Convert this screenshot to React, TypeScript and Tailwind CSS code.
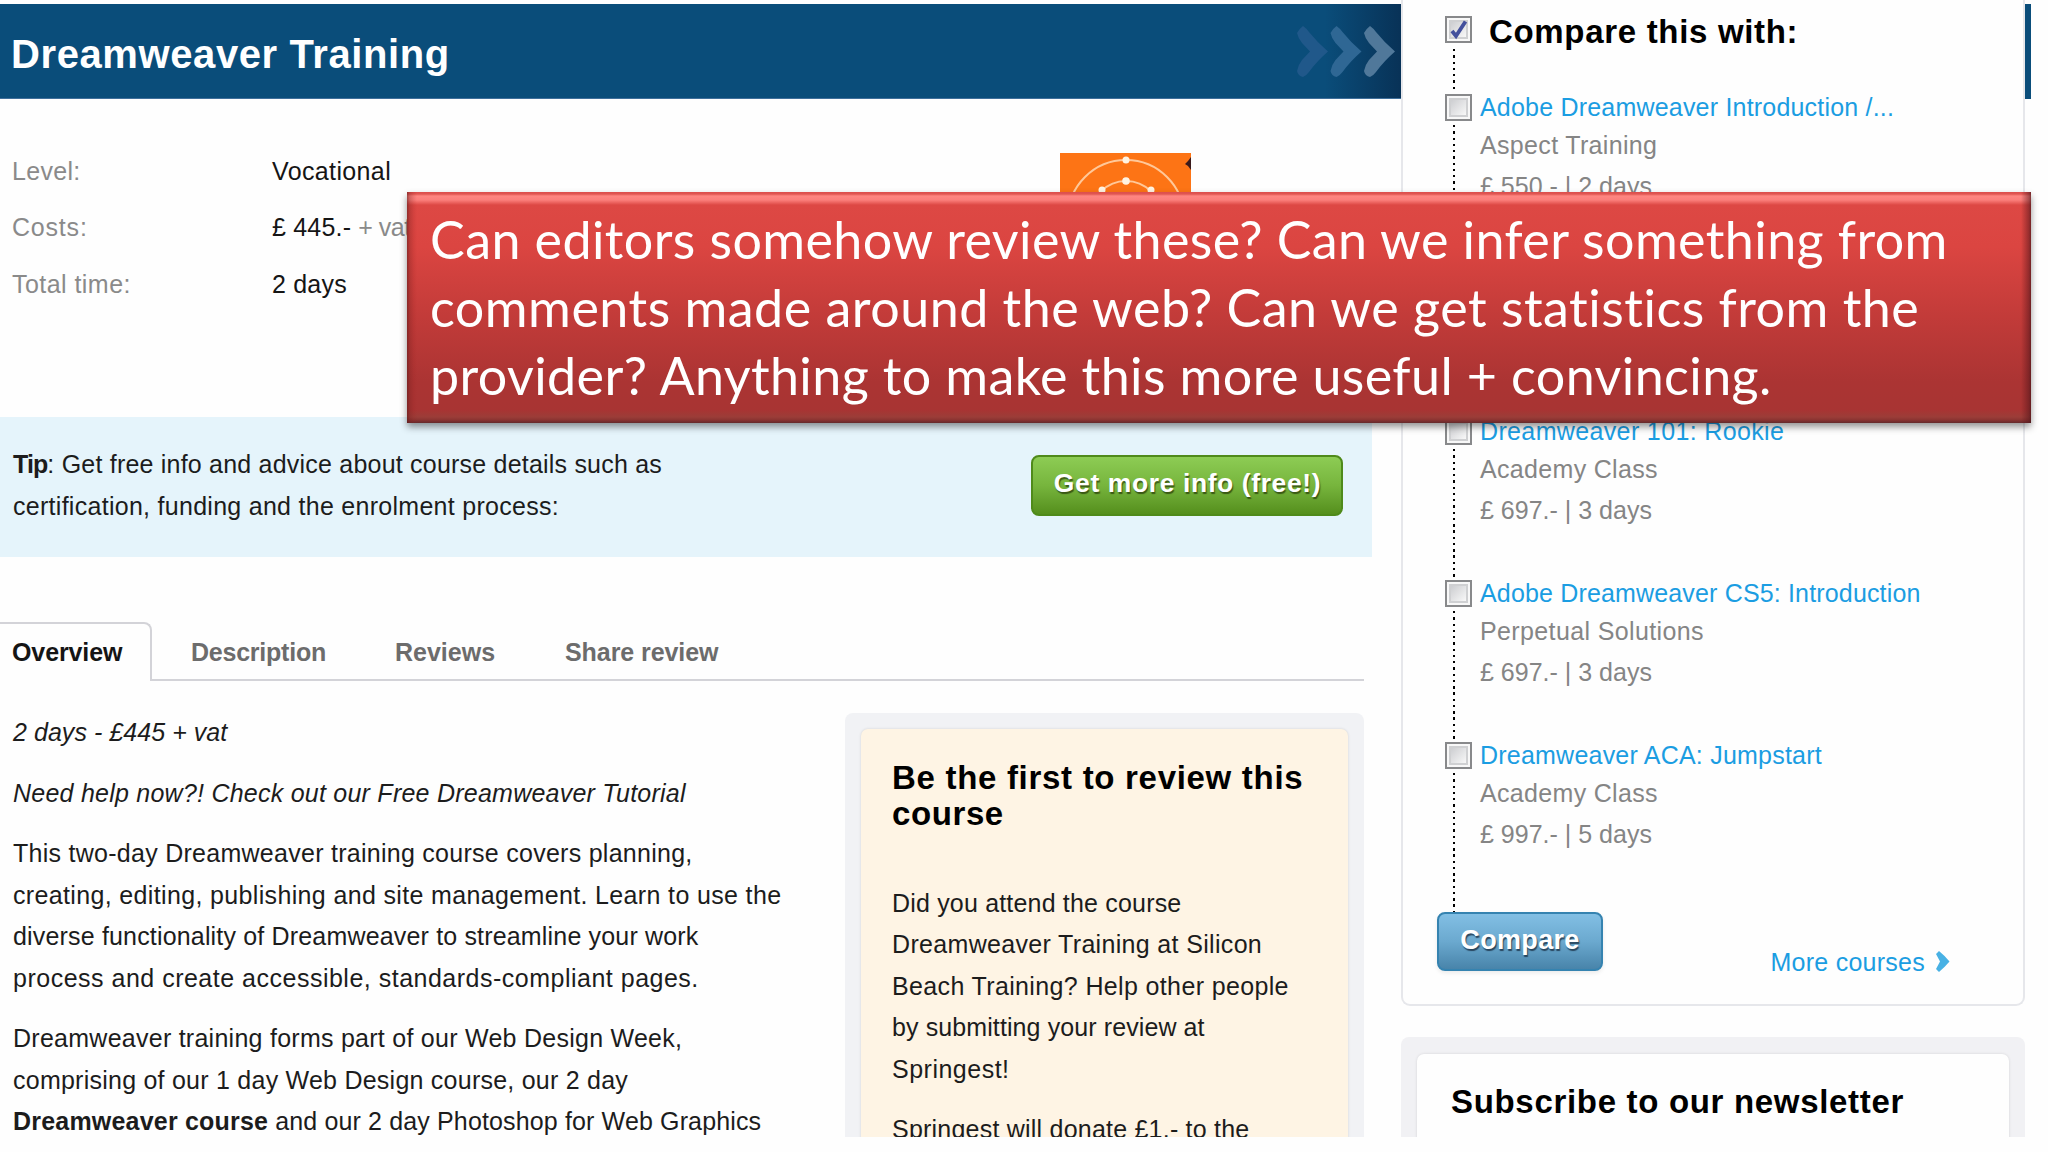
import type { ReactNode } from "react";

function Line({ className = "", children }: { className?: string; children: ReactNode }) {
  return <span className={"block whitespace-nowrap " + className}>{children}</span>;
}

function Checkbox({ checked = false }: { checked?: boolean }) {
  return (
    <span className="flex size-[27px] shrink-0 items-center justify-center border-2 border-[#88898b] bg-[#f8f8f8]">
      <span className="flex size-[19px] items-center justify-center border-2 border-[#cfd0d2] bg-linear-to-br from-[#cdced1] to-[#f8f8f8]">
        {checked && (
          <svg viewBox="0 0 18 20" className="size-[20px] shrink-0" fill="none">
            <path d="M2 11l4 5L15.5 1.5" stroke="#43509c" strokeWidth="3.8" />
          </svg>
        )}
      </span>
    </span>
  );
}

function Dots({ className = "" }: { className?: string }) {
  return (
    <span
      className={
        "ml-[8px] block w-[2px] bg-[repeating-linear-gradient(to_bottom,#000_0_2.4px,transparent_2.4px_6.26px)] " +
        className
      }
    />
  );
}

type Course = {
  title: string;
  provider: string;
  price: string;
  titleClass: string;
  providerClass: string;
};

function CourseItem({ course, last = false }: { course: Course; last?: boolean }) {
  return (
    <li className={last ? "flex h-[170px]" : "flex h-[162px]"}>
      <div className="flex w-[35px] shrink-0 flex-col">
        <Checkbox />
        <Dots className={last ? "mt-[4px] flex-1" : "mt-[4px] mb-[3px] flex-1"} />
      </div>
      <div className="text-[#858585]">
        <Line className={"leading-[27px] text-[#1b9de2] " + course.titleClass}>{course.title}</Line>
        <Line className={"mt-[5px] leading-[38px] " + course.providerClass}>{course.provider}</Line>
        <Line className="leading-[45px]">{course.price}</Line>
      </div>
    </li>
  );
}

const first: Course = {
  title: "Adobe Dreamweaver Introduction /...",
  provider: "Aspect Training",
  price: "£ 550.- | 2 days",
  titleClass: "tracking-[0.2px]",
  providerClass: "tracking-[0.33px]",
};

const rest: Course[] = [
  {
    title: "Dreamweaver 101: Rookie",
    provider: "Academy Class",
    price: "£ 697.- | 3 days",
    titleClass: "tracking-[0.36px]",
    providerClass: "tracking-[0.32px]",
  },
  {
    title: "Adobe Dreamweaver CS5: Introduction",
    provider: "Perpetual Solutions",
    price: "£ 697.- | 3 days",
    titleClass: "tracking-[0.16px]",
    providerClass: "tracking-[0.37px]",
  },
  {
    title: "Dreamweaver ACA: Jumpstart",
    provider: "Academy Class",
    price: "£ 997.- | 5 days",
    titleClass: "tracking-[0.22px]",
    providerClass: "tracking-[0.32px]",
  },
];

function Arrows() {
  const shape = "M6 0Q3 2 0 7Q1 12 5 17L13 25.500L5 34Q1 39 0 45Q1 50 6 51Q9 50 12 46Q20 35 31 25.500Q20 16 12 6Q9 2 6 0Z";
  return (
    <svg width="99" height="51" viewBox="0 0 99 51" className="mt-px">
      <path d={shape} fill="#20588a" />
      <path d={shape} transform="translate(33.5 0)" fill="#2f6794" />
      <path d={shape} transform="translate(67 0)" fill="#50789a" />
    </svg>
  );
}

function ProviderLogo() {
  return (
    <svg width="131" height="131" viewBox="0 0 131 131" className="block">
      <rect width="131" height="131" fill="#fd7415" />
      <g fill="none" stroke="#ffc899" strokeWidth="2">
        <circle cx="66" cy="65" r="58" />
        <circle cx="66" cy="63" r="35" />
      </g>
      <g fill="#fff3e2">
        <circle cx="66" cy="7" r="3.5" />
        <circle cx="66" cy="28" r="3.8" />
        <circle cx="42" cy="37" r="3.5" />
        <circle cx="91" cy="37" r="3.5" />
      </g>
      <path d="M131 4l-3 4-3 3 3 2 3 4z" fill="#3a1a1c" />
    </svg>
  );
}

function Detail({ label, children }: { label: ReactNode; children: ReactNode }) {
  return (
    <div className="flex h-[56.25px] leading-[56px] whitespace-nowrap">
      <dt className="w-[260px] text-[#8a8a8a]">{label}</dt>
      <dd className="text-[#151515]">{children}</dd>
    </div>
  );
}

export default function App() {
  return (
    <div className="relative h-[1152px] w-[2048px] overflow-hidden bg-[#fefefe] font-['Liberation_Sans',Arial,sans-serif] text-[25px] text-[#1c1c1c]">
      <div className="flex h-[1137px] overflow-hidden">
        <main className="w-[1401px] shrink-0 pt-1">
          <header className="flex h-[95px] items-center justify-between border-b border-[#3f6f9b] bg-[linear-gradient(to_right,#0a4d7a_0,#0a4d7a_1325px,#083257_1401px)] pr-[5px] pl-[11px]">
            <h1 className="pt-[5px] text-[40px] leading-[90px] font-bold tracking-[0.6px] whitespace-nowrap text-white">
              Dreamweaver Training
            </h1>
            <Arrows />
          </header>

          <section className="flex h-[318px] justify-between pt-[44px] pr-[210px] pl-[12px]">
            <dl>
              <Detail label={<span className="tracking-[0.3px]">Level:</span>}>
                <span className="tracking-[0.37px]">Vocational</span>
              </Detail>
              <Detail label={<span className="tracking-[0.8px]">Costs:</span>}>
                <span className="tracking-[0.2px]">£ 445.-</span>{" "}
                <span className="tracking-[-0.5px] text-[#8a8a8a]">+ vat</span>
              </Detail>
              <Detail label={<span className="tracking-[0.45px]">Total time:</span>}>
                <span className="tracking-[0.2px]">2 days</span>
              </Detail>
            </dl>
            <div className="pt-[10px]">
              <ProviderLogo />
            </div>
          </section>

          <section className="flex h-[140px] w-[1372px] items-start justify-between bg-[#e5f4fb] pr-[29px] pl-[13px]">
            <p className="pt-[27px] leading-[41.6px]">
              <Line className="tracking-[0.21px]">
                <b className="tracking-[-0.9px]">Tip</b>: Get free info and advice about course details such as
              </Line>
              <Line className="tracking-[0.28px]">certification, funding and the enrolment process:</Line>
            </p>
            <button className="mt-[38px] h-[61px] w-[312px] rounded-[8px] border-2 border-[#4f8a1a] bg-linear-to-b from-[#8dcc54] via-[#77b53d] to-[#558f1c] pb-[4px] pl-[1px] text-[26.5px] font-bold tracking-[0.6px] whitespace-nowrap text-white [text-shadow:1px_2px_1px_rgba(40,60,10,0.75)]">
              Get more info (free!)
            </button>
          </section>

          <nav className="mt-[65px] flex h-[59px] w-[1364px] font-bold whitespace-nowrap text-[#6c6c6c]">
            <a className="w-[152px] rounded-tr-[8px] border-t-2 border-r-2 border-[#d3d3d8] pl-[12px] leading-[56px] tracking-[-0.11px] text-[#151515]">
              Overview
            </a>
            <div className="flex flex-1 border-b-2 border-[#d3d3d8] pl-[39px] leading-[60px]">
              <a className="w-[204px] tracking-[-0.23px]">Description</a>
              <a className="w-[170px]">Reviews</a>
              <a className="tracking-[-0.07px]">Share review</a>
            </div>
          </nav>

          <section className="flex justify-between pr-[37px] pl-[13px]">
            <article className="flex flex-col gap-[19px] pt-[31px] leading-[41.5px]">
              <p className="italic">
                <Line className="tracking-[0.05px]">2 days - £445 + vat</Line>
              </p>
              <p className="italic">
                <Line className="tracking-[0.24px]">Need help now?! Check out our Free Dreamweaver Tutorial</Line>
              </p>
              <p>
                <Line className="tracking-[0.27px]">This two-day Dreamweaver training course covers planning,</Line>
                <Line className="tracking-[0.35px]">
                  creating, editing, publishing and site management. Learn to use the
                </Line>
                <Line className="tracking-[0.17px]">diverse functionality of Dreamweaver to streamline your work</Line>
                <Line className="tracking-[0.5px]">process and create accessible, standards-compliant pages.</Line>
              </p>
              <p>
                <Line className="tracking-[0.26px]">Dreamweaver training forms part of our Web Design Week,</Line>
                <Line className="tracking-[0.24px]">comprising of our 1 day Web Design course, our 2 day</Line>
                <Line className="tracking-[0.14px]">
                  <b className="tracking-[0.2px]">Dreamweaver course</b> and our 2 day Photoshop for Web Graphics
                </Line>
              </p>
            </article>

            <aside className="mt-[32px] h-[480px] w-[519px] rounded-[8px] bg-[#f1f2f5] px-[16px] pt-[16px]">
              <div className="h-[480px] rounded-[7px] bg-[#fef4e4] pt-[31px] pl-[31px] shadow-[0_0_3px_rgba(0,0,0,0.13)]">
                <h2 className="text-[33px] leading-[35.5px] font-bold text-black">
                  <Line className="tracking-[0.7px]">Be the first to review this</Line>
                  <Line className="tracking-[0.6px]">course</Line>
                </h2>
                <p className="mt-[51.5px] leading-[41.6px]">
                  <Line className="tracking-[0.18px]">Did you attend the course</Line>
                  <Line className="tracking-[0.33px]">Dreamweaver Training at Silicon</Line>
                  <Line className="tracking-[0.36px]">Beach Training? Help other people</Line>
                  <Line className="tracking-[0.1px]">by submitting your review at</Line>
                  <Line className="tracking-[0.5px]">Springest!</Line>
                </p>
                <p className="mt-[19px] leading-[41.6px]">
                  <Line className="tracking-[0.22px]">Springest will donate £1.- to the</Line>
                </p>
              </div>
            </aside>
          </section>
        </main>

        <div className="w-[624px] shrink-0">
          <section className="h-[1006px] rounded-b-[9px] border-x-2 border-b-2 border-[#e6e7eb] pl-[34px]">
            <div className="flex h-[94px] pt-[16px] pl-[8px]">
              <div className="flex w-[44px] flex-col">
                <Checkbox checked />
                <Dots className="mt-[6px] h-[41px]" />
              </div>
              <h2 className="text-[33px] leading-[31px] font-bold tracking-[0.68px] whitespace-nowrap text-black">
                Compare this with:
              </h2>
            </div>
            <ul className="pl-[8px]">
              <CourseItem course={first} />
              <li className="h-[162px]" />
              {rest.map((c, i) => (
                <CourseItem key={c.title} course={c} last={i === rest.length - 1} />
              ))}
            </ul>
            <div className="flex justify-between pr-[73px]">
              <button className="h-[59px] w-[166px] rounded-[8px] border-2 border-[#3583b0] bg-linear-to-b from-[#82bfe4] via-[#6ba9cf] to-[#4884aa] pb-[2px] text-[27px] font-bold tracking-[0.33px] text-white shadow-[0_2px_4px_rgba(0,0,0,0.08)] [text-shadow:1px_2px_1px_rgba(20,40,60,0.75)]">
                Compare
              </button>
              <a className="flex items-center gap-[11px] pt-[39px] leading-[18px] tracking-[0.25px] text-[#1b9de2]">
                <span>More courses</span>
                <svg width="14" height="21" viewBox="0 0 14 21">
                  <path d="M3 0L0 3L4 10.500L0 18L3 21Q8 17 13.500 10.500Q8 4 3 0Z" fill="#48b1e4" />
                </svg>
              </a>
            </div>
          </section>

          <section className="mt-[31px] h-[140px] rounded-[8px] bg-[#f1f1f4] px-[16px] pt-[17px]">
            <div className="h-[140px] rounded-[7px] bg-[#fefefe] pl-[34px] shadow-[0_0_3px_rgba(0,0,0,0.12)]">
              <h2 className="pt-[30px] text-[33px] leading-[36px] font-bold tracking-[0.68px] whitespace-nowrap text-black">
                Subscribe to our newsletter
              </h2>
            </div>
          </section>
        </div>

        <div className="mt-1 h-[95px] w-[6px] bg-[#0a4d7a]" />
      </div>

      <div className="absolute top-[192px] left-[407px] h-[231px] w-[1624px] bg-[linear-gradient(to_bottom,#dd4e4c_0,#e05652_2px,#ff8681_4px,#fb7f7b_8px,#dd4844_13px,#db4541_55px,#c23b39_125px,#ab3433_190px,#a83433_218px,#9b3d38_225px,#8a3331_228px,#642a2c_231px)] shadow-[0_4px_7px_rgba(0,0,0,0.42)]">
        <div className="h-full bg-[linear-gradient(to_right,rgba(95,25,25,0.6)_0,rgba(120,30,30,0.3)_3px,rgba(150,30,30,0.12)_7px,transparent_10px,transparent_1614px,rgba(90,20,25,0.2)_1617px,rgba(80,20,25,0.5)_1622px,rgba(70,20,25,0.7)_1624px)] pt-[12.5px] pl-[23px] font-['Lato',Carlito,sans-serif] text-[52px] leading-[68.3px] text-white">
          <Line className="tracking-[0.41px]">Can editors somehow review these? Can we infer something from</Line>
          <Line className="tracking-[0.5px]">comments made around the web? Can we get statistics from the</Line>
          <Line className="tracking-[0.4px]">provider? Anything to make this more useful + convincing.</Line>
        </div>
      </div>
    </div>
  );
}
